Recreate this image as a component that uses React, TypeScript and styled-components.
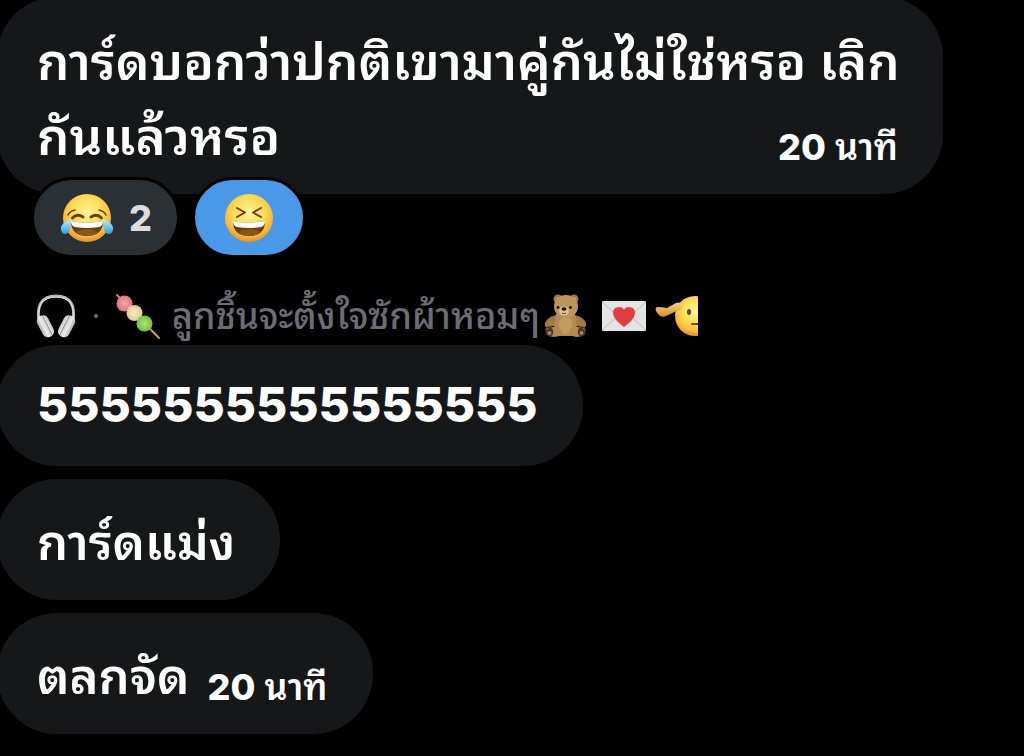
import React from "react";
import styled, { createGlobalStyle } from "styled-components";

const GlobalStyle = createGlobalStyle`
  * { box-sizing: border-box; }
  body {
    margin: 0;
    background: #000;
    color: #fff;
    font-family: Inter, "Thonburi", "Noto Sans Thai Looped", "Loma", "Noto Sans Thai", sans-serif;
    overflow-x: hidden;
  }
`;

const Feed = styled.main`
  display: flex;
  flex-direction: column;
  align-items: flex-start;
  margin: -3px 0 0 -3px;
`;

const Bubble = styled.article<{ $wide?: boolean; $digits?: boolean }>`
  display: flex;
  align-items: flex-end;
  justify-content: space-between;
  gap: 18px;
  min-height: 121px;
  max-width: 946px;
  width: ${(p) => (p.$wide ? "93%" : "auto")};
  padding: ${(p) => (p.$digits ? "23px 45px 24px 40px" : "27px 45px 20px 40px")};
  border-radius: 60px;
  background: #161719;
`;

const Message = styled.p<{ $digits?: boolean }>`
  margin: 0;
  font-size: ${(p) => (p.$digits ? "48px" : "49px")};
  line-height: 74px;
  font-weight: ${(p) => (p.$digits ? 800 : 600)};
  white-space: nowrap;
`;

const FirstMessage = styled(Message)`
  width: 0;
  flex: 1;
  font-size: 51px;
  line-height: 75px;
`;

const Time = styled.time`
  font-size: 36px;
  line-height: 54px;
  font-weight: 600;
  white-space: nowrap;

  b {
    font-weight: 800;
  }
`;

const Reactions = styled.div`
  position: relative;
  display: flex;
  gap: 12px;
  margin: -17px 0 0 34px;
`;

const Reaction = styled.button<{ $active?: boolean }>`
  display: flex;
  align-items: center;
  gap: 16px;
  height: 81px;
  padding: ${(p) => (p.$active ? "0 29px" : "0 25px 0 27px")};
  border: 3px solid #000;
  border-radius: 41px;
  background: ${(p) => (p.$active ? "#4a99e9" : "#2b3034")};
  color: #dcdcde;
  font-family: inherit;
  font-size: 36px;
  font-weight: 800;
`;

const Sender = styled.header`
  display: flex;
  align-items: center;
  width: 662px;
  max-width: 100%;
  height: 52px;
  margin: 32px 0 3px 39px;
  overflow: hidden;
  color: #6d6d73;
  white-space: nowrap;
`;

const SenderName = styled.span`
  margin: 0 4px 0 10px;
  font-size: 36px;
  line-height: 52px;
  font-weight: 500;
`;

const Dot = styled.span`
  width: 4px;
  height: 4px;
  margin: 0 18px;
  border-radius: 50%;
  background: #6d6d73;
  flex: none;
`;

const Stack = styled.section`
  display: flex;
  flex-direction: column;
  align-items: flex-start;
  gap: 13px;
`;

const Art = styled.svg`
  flex: none;
  display: block;
  overflow: visible;
`;

const FaceFill = ({ id }: { id: string }) => (
  <radialGradient id={id} cx="50%" cy="38%" r="62%">
    <stop offset="0" stopColor="#fff3a0" />
    <stop offset="0.5" stopColor="#fcdc55" />
    <stop offset="0.82" stopColor="#f6b93b" />
    <stop offset="1" stopColor="#e58f22" />
  </radialGradient>
);

const Mouth = () => (
  <>
    <path d="M9 28 Q25 31 41 28 Q41 43 25 43 Q9 43 9 28Z" fill="#6b3d0c" />
    <path d="M9 28 Q25 31 41 28 Q41 33 37 34 Q25 36 13 34 Q9 33 9 28Z" fill="#fff" />
    <path d="M14 39 Q25 33 36 39 Q32 43 25 43 Q18 43 14 39Z" fill="#8a551b" />
  </>
);

const JoyFace = () => (
  <Art width="52" height="50" viewBox="-1 0 52 50" role="img" aria-label="joy">
    <defs>
      <FaceFill id="joy" />
      <linearGradient id="tear" x1="0" y1="0" x2="0" y2="1">
        <stop offset="0" stopColor="#bdf0ff" />
        <stop offset="1" stopColor="#2b9fe0" />
      </linearGradient>
    </defs>
    <circle cx="25" cy="25" r="24" fill="url(#joy)" />
    <Mouth />
    <g fill="none" stroke="#6b3d0c" strokeLinecap="round">
      <path d="M10.500 25 Q15 20 21 24M29 24 Q35 20 39.500 25" strokeWidth="3" />
      <path d="M6 22 Q8 18 13 17M37 17 Q42 18 44 22" strokeWidth="1.600" />
    </g>
    <path d="M9 26 Q-3 31 -1 37 Q1 43 6 40 Q9 37 9 26Z" fill="url(#tear)" />
    <path d="M41 26 Q53 31 51 37 Q49 43 44 40 Q41 37 41 26Z" fill="url(#tear)" />
  </Art>
);

const SquintFace = () => (
  <Art width="50" height="50" viewBox="0 0 50 50" role="img" aria-label="laughing">
    <defs>
      <FaceFill id="squint" />
    </defs>
    <circle cx="25" cy="25" r="24" fill="url(#squint)" />
    <Mouth />
    <path
      d="M13 15 L21 19.500 L13 24M37 15 L29 19.500 L37 24"
      fill="none"
      stroke="#6b3d0c"
      strokeWidth="2"
      strokeLinecap="round"
      strokeLinejoin="round"
    />
  </Art>
);

const Headphones = () => (
  <Art width="40" height="44" viewBox="0 0 40 44" role="img" aria-label="headphones">
    <defs>
      <linearGradient id="cup">
        <stop offset="0" stopColor="#a9abad" />
        <stop offset="0.35" stopColor="#e8e9ea" />
        <stop offset="0.6" stopColor="#d6d7d9" />
        <stop offset="0.68" stopColor="#8e9093" />
        <stop offset="0.76" stopColor="#e2e3e5" />
        <stop offset="1" stopColor="#bfc0c3" />
      </linearGradient>
      <g id="side">
        <path d="M3 28 Q-1 2 20 2" fill="none" stroke="#b4b6b8" strokeWidth="3" />
        <path d="M3 26 Q0 3 20 3" fill="none" stroke="#e9eaeb" strokeWidth="1" />
        <rect x="3.500" y="21" width="12" height="23" rx="5.500" transform="rotate(-27 9 32.500)" fill="url(#cup)" />
      </g>
    </defs>
    <use href="#side" />
    <use href="#side" transform="translate(40 0) scale(-1 1)" />
  </Art>
);

const Dango = () => (
  <Art width="46" height="46" viewBox="0 0 46 46" role="img" aria-label="dango">
    <defs>
      <radialGradient id="pink"><stop offset="0" stopColor="#f8a4aa" /><stop offset="1" stopColor="#dc7684" /></radialGradient>
      <radialGradient id="cream"><stop offset="0" stopColor="#f7edc6" /><stop offset="1" stopColor="#dccb93" /></radialGradient>
      <radialGradient id="green"><stop offset="0" stopColor="#a9e872" /><stop offset="1" stopColor="#73c044" /></radialGradient>
    </defs>
    <path d="M1 2 L43 45" stroke="#c99a58" strokeWidth="2" strokeLinecap="round" />
    <circle cx="8.500" cy="10.500" r="8" fill="url(#pink)" />
    <circle cx="18.500" cy="20" r="8" fill="url(#cream)" />
    <circle cx="28.500" cy="30.500" r="8" fill="url(#green)" />
  </Art>
);

const Teddy = () => (
  <Art width="44" height="44" viewBox="0 0 44 44" role="img" aria-label="teddy bear">
    <g fill="#a07a43">
      <circle cx="14" cy="5" r="4.500" />
      <circle cx="30" cy="5" r="4.500" />
      <path d="M13 21 Q3 23 1 29 Q0 34 5 33 L14 31Z" />
      <path d="M30 21 Q40 23 42 29 Q43 34 38 33 L29 31Z" />
    </g>
    <circle cx="14" cy="5" r="2" fill="#c9a56c" />
    <circle cx="30" cy="5" r="2" fill="#c9a56c" />
    <path d="M12 20 H31 Q34 30 32 42 H11 Q9 30 12 20Z" fill="#b18a4f" />
    <ellipse cx="21.500" cy="31" rx="7" ry="9" fill="#c29b60" />
    <ellipse cx="22" cy="12.500" rx="12" ry="11.500" fill="#bc955a" />
    <ellipse cx="20" cy="17" rx="5" ry="4.500" fill="#dfc18d" />
    <ellipse cx="20" cy="15" rx="2.500" ry="1.800" fill="#1d1410" />
    <circle cx="14" cy="13.500" r="1.400" fill="#20130a" />
    <circle cx="26.500" cy="13.500" r="1.400" fill="#20130a" />
    <path d="M18 19 Q20 20.500 22 19" stroke="#6b4b28" fill="none" />
    <ellipse cx="10" cy="38" rx="8" ry="5" fill="#b18a4f" />
    <ellipse cx="33" cy="38" rx="8" ry="5" fill="#b18a4f" />
    <ellipse cx="5" cy="37.500" rx="4" ry="5" transform="rotate(-20 5 37)" fill="#4b3525" />
    <ellipse cx="38" cy="37.500" rx="4" ry="5" transform="rotate(20 38 37)" fill="#4b3525" />
    <circle cx="5.500" cy="39" r="2" fill="#a18260" />
    <circle cx="37.500" cy="39" r="2" fill="#a18260" />
    <path d="M2.500 36 L4 34 M39 34 L40.500 36" stroke="#a18260" />
  </Art>
);

const LoveLetter = () => (
  <Art width="44" height="30" viewBox="0 0 44 30" role="img" aria-label="love letter">
    <rect width="44" height="30" rx="1" fill="#e2e3e5" />
    <path d="M0 29 L17 14M44 29 L27 14M0 1 L19 18 Q22 20 25 18 L44 1" fill="none" stroke="#b9bbbe" />
    <path d="M22 26 Q11 18 11 12 Q11 6 17 6 Q21 6 22 9 Q23 6 27 6 Q33 6 33 12 Q33 18 22 26Z" fill="#e23e42" />
  </Art>
);

const Salute = () => (
  <Art width="56" height="44" viewBox="8 0 56 44" role="img" aria-label="saluting face">
    <defs>
      <FaceFill id="salute" />
      <linearGradient id="hand" x1="0" y1="0" x2="0" y2="1">
        <stop offset="0" stopColor="#f8d273" />
        <stop offset="1" stopColor="#d98f30" />
      </linearGradient>
    </defs>
    <circle cx="43" cy="22" r="20" fill="url(#salute)" />
    <path d="M5 13 Q3 14 4 17 L6 20 Q9 24 14 22 L29 15 Q32 12 29 9 Q27 8 24 9 L15 14 Q10 13 5 13Z" fill="url(#hand)" />
    <ellipse cx="37" cy="18" rx="2" ry="3" fill="#68420f" />
    <path d="M40 30 H50" stroke="#68420f" strokeWidth="2" strokeLinecap="round" />
  </Art>
);

const Emojis = styled.span`
  display: flex;
  align-items: center;
  gap: 14px;
`;

export default function App() {
  return (
    <>
      <GlobalStyle />
      <Feed>
        <Bubble $wide>
          <FirstMessage>
            การ์ดบอกว่าปกติเขามาคู่กันไม่ใช่หรอ เลิก
            <br />
            กันแล้วหรอ
          </FirstMessage>
          <Time><b>20</b> นาที</Time>
        </Bubble>
        <Reactions>
          <Reaction type="button">
            <JoyFace />
            <span>2</span>
          </Reaction>
          <Reaction type="button" $active>
            <SquintFace />
          </Reaction>
        </Reactions>
        <Sender>
          <Headphones />
          <Dot />
          <Dango />
          <SenderName>ลูกชิ้นจะตั้งใจซักผ้าหอมๆ</SenderName>
          <Emojis>
            <Teddy />
            <LoveLetter />
            <Salute />
          </Emojis>
        </Sender>
        <Stack>
          <Bubble $digits>
            <Message $digits>5555555555555555</Message>
          </Bubble>
          <Bubble>
            <Message>การ์ดแม่ง</Message>
          </Bubble>
          <Bubble>
            <Message>ตลกจัด</Message>
            <Time><b>20</b> นาที</Time>
          </Bubble>
        </Stack>
      </Feed>
    </>
  );
}
